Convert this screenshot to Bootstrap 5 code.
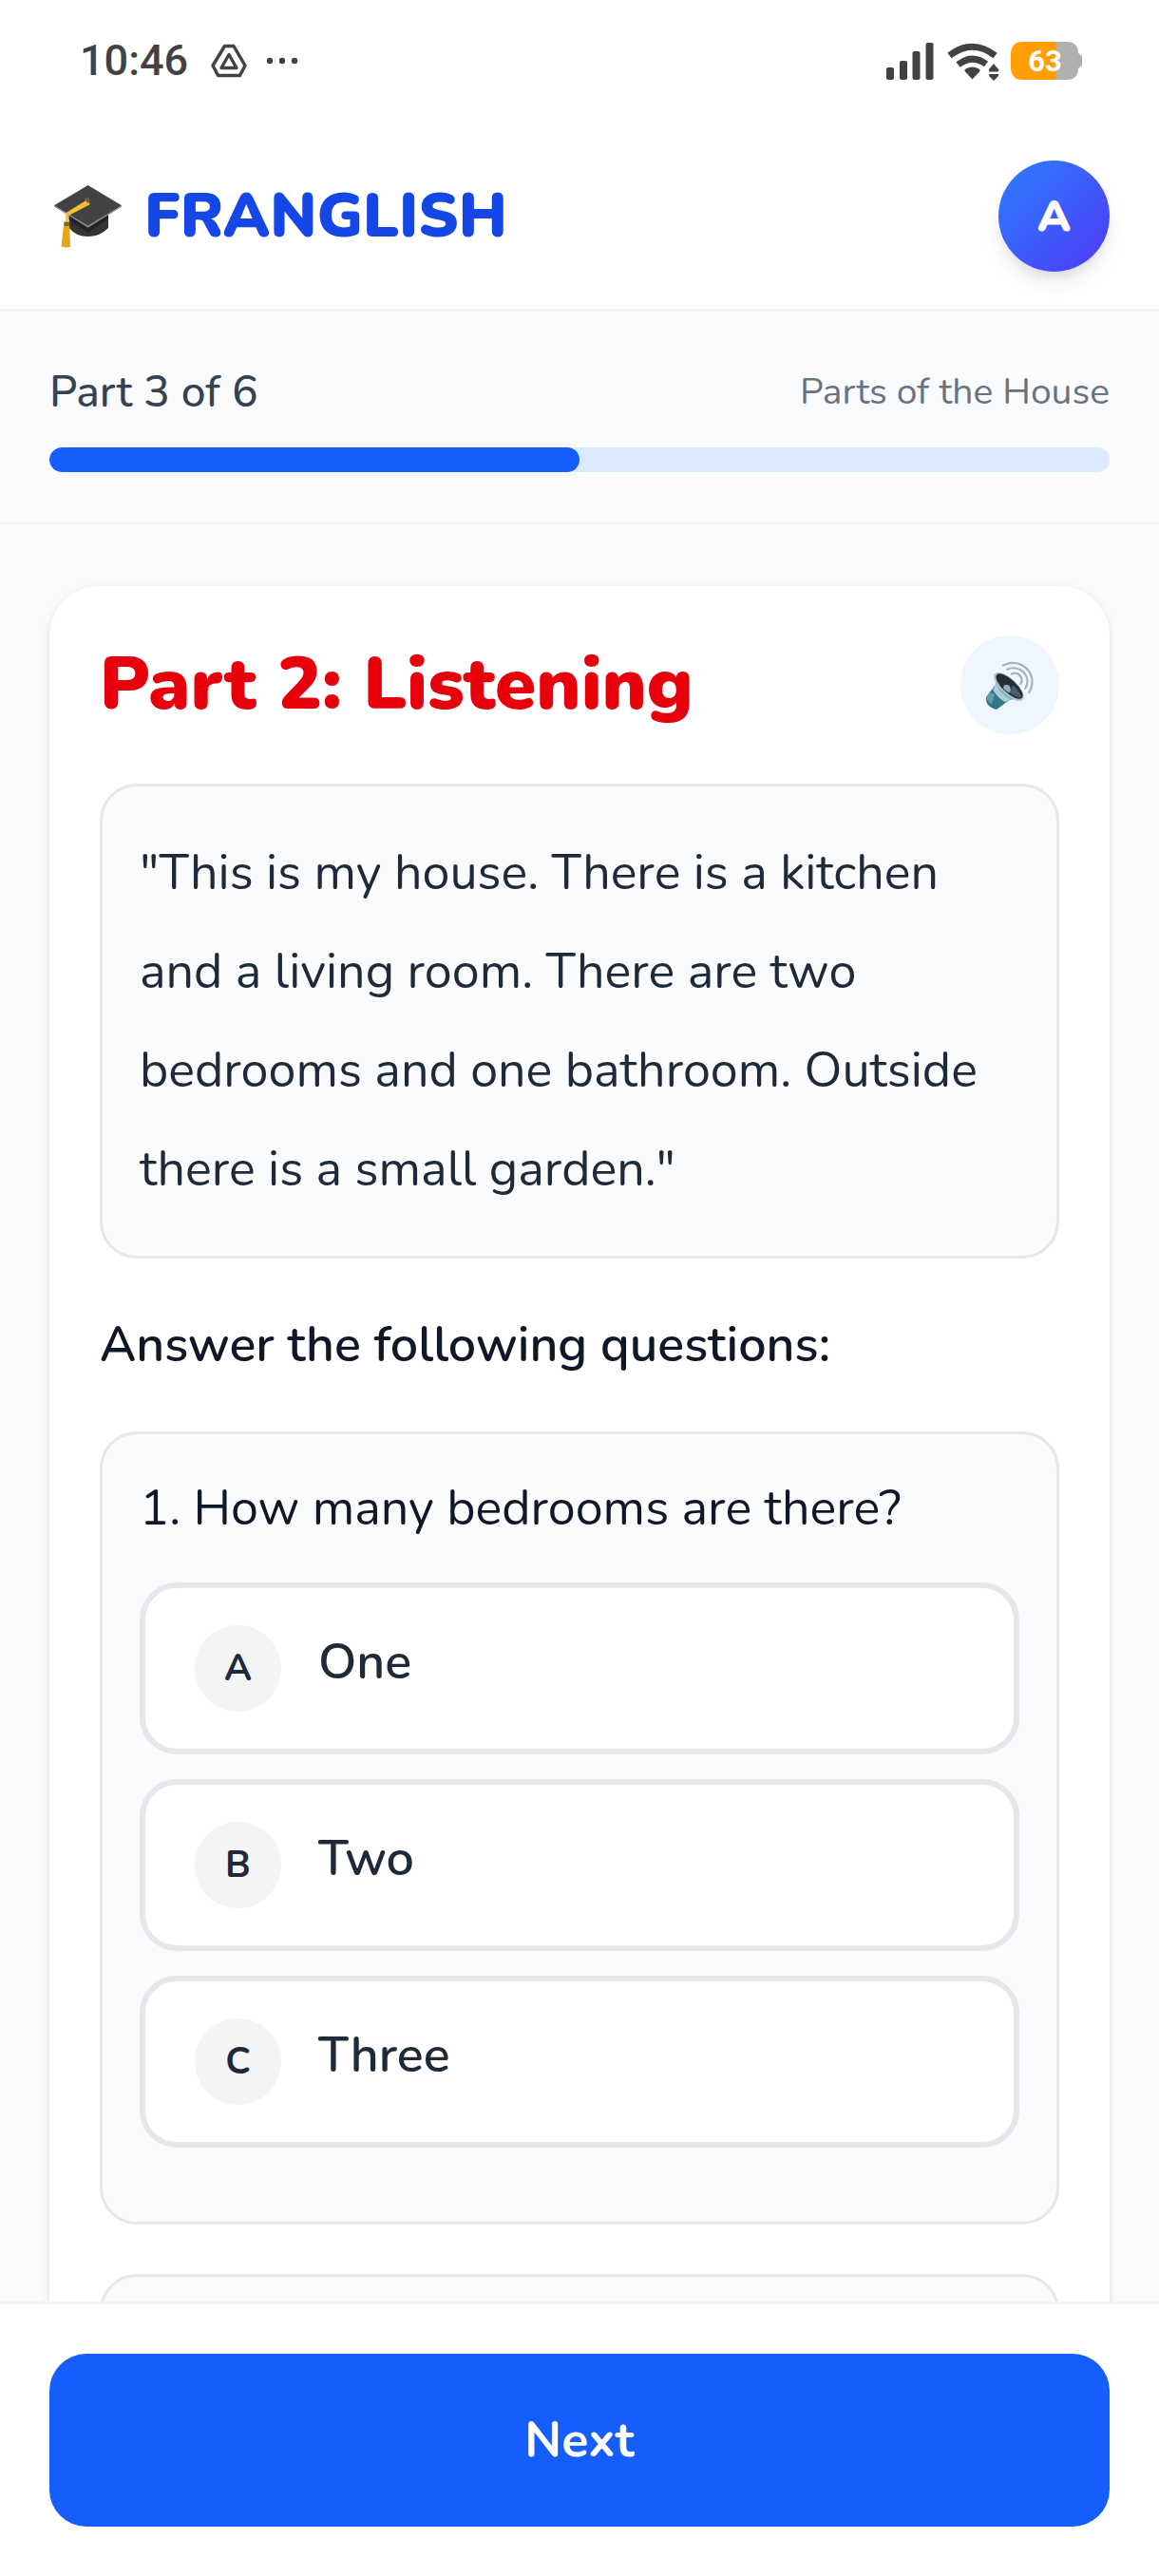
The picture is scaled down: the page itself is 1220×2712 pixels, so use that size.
<!DOCTYPE html>
<html lang="en">
<head>
<meta charset="utf-8">
<meta name="viewport" content="width=device-width, initial-scale=1">
<title>Franglish – Parts of the House</title>
<link href="https://cdn.jsdelivr.net/npm/bootstrap@5.3.0/dist/css/bootstrap.min.css" rel="stylesheet">
<style>
  :root {
    --ink: #1e2939; --ink-strong: #101828; --line: #e5e7eb; --line-soft: #f3f4f6;
    --paper: #fafbfd; --blue: #155dfc; --gap-s: 26px; --gap-m: 39px; --gap-l: 52px;
  }
  body { font-family: Nunito, Lato, "Noto Sans", sans-serif; font-size: 52px; line-height: 78px; color: var(--ink); background: var(--paper); }
  .status-bar { height: 130px; padding: 18px 81px 0 84px; font-family: Roboto, sans-serif; color: #424242; }
  .status-bar-inner { height: 92px; }
  .status-time { font-size: 45px; line-height: 92px; }
  .app-header { padding: var(--gap-m) var(--gap-l); border-bottom: 3px solid var(--line-soft); }
  .brand-name { font-size: 65px; line-height: 91px; font-weight: 900; color: #1447e6; }
  .avatar { width: 117px; height: 117px; font-size: 46px; font-weight: 900; color: #fff; background: linear-gradient(135deg, #2b7fff, #4f39f6); box-shadow: 0 13px 20px -3px rgba(0,0,0,.1), 0 6px 13px -6px rgba(0,0,0,.1); }
  .lesson-progress { padding: var(--gap-l); border-bottom: 3px solid var(--line-soft); }
  .step-label { font-size: 46px; line-height: 65px; font-weight: 500; color: #364153; }
  .topic-label { font-size: 39px; line-height: 65px; color: #6a7282; }
  .progress { height: 26px; margin-top: var(--gap-s); border-radius: 13px; background: #dbeafe; }
  .progress-bar { border-radius: 13px; background: var(--blue); }
  .lesson-scroll { min-height: 0; padding: 65px var(--gap-l) 0; scrollbar-width: none; }
  .lesson-card { padding: var(--gap-l) 53px; border-radius: var(--gap-l); box-shadow: 0 3px 10px rgba(0,0,0,.1), 0 3px 6px -3px rgba(0,0,0,.1); }
  .part-title { font-size: 78px; line-height: 104px; font-weight: 900; color: #e7000b; }
  .listen-btn { width: 104px; height: 104px; background: #eff6ff; }
  .panel { padding: var(--gap-m); border: 3px solid var(--line); border-radius: var(--gap-m); background: var(--paper); }
  .transcript { margin: var(--gap-l) 0 0; line-height: 104px; }
  .instruction { margin: var(--gap-l) 0; font-size: 52px; line-height: 78px; font-weight: 600; color: var(--ink-strong); }
  .question-text { margin-bottom: var(--gap-m); font-size: 52px; line-height: 78px; color: var(--ink-strong); }
  .choice { padding: var(--gap-m) var(--gap-l); gap: var(--gap-m); border: 6px solid var(--line); border-radius: var(--gap-m); background: #fff; font-weight: 600; font-size: 52px; line-height: 78px; color: var(--ink); }
  .choice-key { width: 91px; height: 91px; background: #f3f4f6; font-size: 39px; line-height: 91px; font-weight: 700; }
  .choice-stack { clear: both; gap: var(--gap-s); padding-bottom: var(--gap-m); }
  .next-question { margin-top: var(--gap-l); min-height: 400px; }
  .action-bar { padding: var(--gap-l); border-top: 3px solid var(--line-soft); }
  .next-btn { padding: var(--gap-l); border-radius: var(--gap-m); background: var(--blue); color: #fff; font-size: 52px; line-height: 78px; font-weight: 700; }
</style>
</head>
<body>
<div class="d-flex flex-column vh-100 overflow-hidden">
  <div class="status-bar bg-white flex-shrink-0">
    <div class="status-bar-inner d-flex align-items-center">
      <span class="status-time fw-medium">10:46</span>
      <svg class="ms-4" width="38" height="36" viewBox="0 0 38 36" fill="none" stroke="#424242" stroke-width="3.4" stroke-linejoin="round" aria-hidden="true">
        <path d="M14.500 2.500h9.500l12 20.500-5.500 10.500H7.500L2 23z"/><path d="M19 11.500l8 14H11z"/>
      </svg>
      <svg class="ms-3" width="42" height="8" viewBox="-4 0 42 8" fill="#424242" aria-hidden="true"><circle cx="4" cy="4" r="3.200"/><circle cx="17" cy="4" r="3.200"/><circle cx="30" cy="4" r="3.200"/></svg>
      <svg class="ms-auto" width="206" height="42" viewBox="0 0 206 42" aria-label="Signal, Wi-Fi, battery 63 percent" role="img">
        <g fill="#424242">
          <rect x="0" y="28" width="8" height="13" rx="2"/><rect x="14" y="21" width="8" height="20" rx="2"/><rect x="27.500" y="11" width="8" height="30" rx="2"/><rect x="41.500" y="2" width="8" height="39" rx="2"/>
          <path d="M90.500 40.500l-7.500-8c-1-1.200-.5-2.500 1-3.200q6.500-3.500 13 0c1.500.7 2 2 1 3.200z"/>
          <path d="M108 32.500v-2.500l5-6 5 6q1 2.500-1 2.500zM108 35h10q.5 1.500-.5 2.500l-4.500 4.500-4.500-4.500z"/>
        </g>
        <g fill="none" stroke="#424242" stroke-width="7"><path d="M66.500 15.500Q90.500-3 114.500 15.500"/><path d="M75.500 25Q90.500 13.500 105 24.500"/></g>
        <path fill="#b0b0b0" d="M144 1h46q12 0 12 12l4 3v10l-4 3q0 12-12 12h-46z"/>
        <path fill="#ff9f05" d="M144 1h35v40h-35q-13 0-13-13V14q0-13 13-13z"/>
        <text x="167" y="32" text-anchor="middle" font-family="Roboto, sans-serif" font-weight="700" font-size="31" fill="#fff">63</text>
      </svg>
    </div>
  </div>

  <header class="app-header bg-white d-flex align-items-center justify-content-between flex-shrink-0">
    <div class="d-flex align-items-center gap-4">
      <svg width="76" height="66" viewBox="-5 0 76 66" aria-hidden="true">
        <path d="M15.700 28v17Q23 54 35.600 54T57 45V28z" fill="#343434"/>
        <path d="M15.700 31L35.600 46 57 31v4L35.600 50 15.700 36z" fill="#222"/>
        <path d="M35.600 0L71 21.300 35.600 43.500 0 21.300z" fill="#424242"/>
        <path d="M0 21.300L35.600 42.500 71 21.300v1.500L35.600 44.500 0 22.500z" fill="#8a8a8a"/>
        <circle cx="35" cy="15.500" r="2.800" fill="#6b5b50"/>
        <path d="M34 17.500L13.500 30v10M37 19L14 31" fill="none" stroke="#f5c02e" stroke-width="2.800"/>
        <path d="M10.500 38h5.500l1 27-4 .8-5.500-1.300z" fill="#e5a61c"/>
        <path d="M10.500 39h5.500v4h-5.500z" fill="#8a6510"/>
      </svg>
      <span class="brand-name">FRANGLISH</span>
    </div>
    <button type="button" class="avatar btn border-0 rounded-circle p-0" aria-label="Account A">A</button>
  </header>

  <section class="lesson-progress flex-shrink-0">
    <div class="d-flex justify-content-between align-items-center">
      <span class="step-label">Part 3 of 6</span>
      <span class="topic-label">Parts of the House</span>
    </div>
    <div class="progress" role="progressbar" aria-label="Lesson progress" aria-valuenow="50" aria-valuemin="0" aria-valuemax="100">
      <div class="progress-bar" style="width: 50%"></div>
    </div>
  </section>

  <main class="lesson-scroll flex-grow-1 overflow-auto">
    <div class="lesson-card bg-white">
      <div class="d-flex justify-content-between align-items-center">
        <h1 class="part-title m-0">Part 2: Listening</h1>
        <button type="button" class="listen-btn btn border-0 rounded-circle p-0 d-flex align-items-center justify-content-center" aria-label="Play audio">
          <svg width="54" height="54" viewBox="0 0 54 54" aria-hidden="true">
            <path d="M11 28L2 40Q1 50 13 53L25 44z" fill="#2f7889"/>
            <path d="M6 35l5 2-3 10q-5-3-5.500-7z" fill="#659aa5"/>
            <path d="M10 15q4 9 .5 15Q14 41 24 44.500 31 41 40 42.500z" fill="#82aebb"/>
            <path d="M12 25q-.5 5-3 7 5 9 13 13l5-3q-10-5-15-17z" fill="#a8cfdb"/>
            <ellipse cx="26" cy="29" rx="20" ry="8.500" transform="rotate(43 26 29)" fill="#a9c1ca"/>
            <ellipse cx="26.500" cy="28.500" rx="18" ry="7" transform="rotate(43 26.500 28.500)" fill="#222d38"/>
            <path d="M30 27q8 7 9 13-6 1-12-5z" fill="#4b5f66"/>
            <path d="M20 30q1-5 6-2.500 3 3 1 8-5-2-7-5.500z" fill="#91adb6"/>
            <g fill="none" stroke="#a7afba" stroke-width="2.200" stroke-linecap="round"><path d="M20 6.500C36-3 59 14 47.300 35"/><path d="M24.300 10.700C36 5 51 17 43.300 30.700"/><path d="M29 15.500C36 12 42 20 38.300 26"/></g>
          </svg>
        </button>
      </div>

      <p class="panel transcript">"This is my house. There is a kitchen and a living room. There are two bedrooms and one bathroom. Outside there is a small garden."</p>

      <h2 class="instruction">Answer the following questions:</h2>

      <fieldset class="panel">
        <legend class="question-text">1. How many bedrooms are there?</legend>
        <div class="choice-stack d-flex flex-column">
          <div><input type="radio" class="btn-check" name="q1" id="q1a"><label class="choice btn w-100 d-flex align-items-start text-start" for="q1a"><span class="choice-key rounded-circle text-center">A</span><span>One</span></label></div>
          <div><input type="radio" class="btn-check" name="q1" id="q1b"><label class="choice btn w-100 d-flex align-items-start text-start" for="q1b"><span class="choice-key rounded-circle text-center">B</span><span>Two</span></label></div>
          <div><input type="radio" class="btn-check" name="q1" id="q1c"><label class="choice btn w-100 d-flex align-items-start text-start" for="q1c"><span class="choice-key rounded-circle text-center">C</span><span>Three</span></label></div>
        </div>
      </fieldset>

      <div class="panel next-question"></div>
    </div>
  </main>

  <footer class="action-bar bg-white flex-shrink-0">
    <button type="button" class="next-btn btn border-0 w-100">Next</button>
  </footer>
</div>
<script src="https://cdn.jsdelivr.net/npm/bootstrap@5.3.0/dist/js/bootstrap.bundle.min.js"></script>
</body>
</html>
